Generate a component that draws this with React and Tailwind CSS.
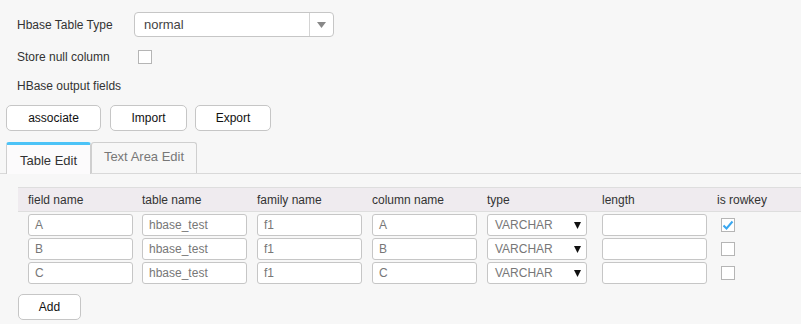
import React, { useState } from 'react';

const rows = [
  { field: 'A', table: 'hbase_test', family: 'f1', column: 'A', type: 'VARCHAR', length: '', rowkey: true },
  { field: 'B', table: 'hbase_test', family: 'f1', column: 'B', type: 'VARCHAR', length: '', rowkey: false },
  { field: 'C', table: 'hbase_test', family: 'f1', column: 'C', type: 'VARCHAR', length: '', rowkey: false },
];

const cols = 'grid grid-cols-[114px_115px_115px_115px_115px_119px_1fr]';

const Box = ({ checked }) => (
  <div className="w-[14px] h-[14px] border border-[#b5b5b5] bg-white flex items-center justify-center">
    {checked && (
      <svg width="12" height="10" viewBox="0 0 12 10">
        <path d="M1.5 5.5 L4.5 8.5 L10.5 1.5" fill="none" stroke="#39a7f0" strokeWidth="2" />
      </svg>
    )}
  </div>
);

const Cell = ({ value }) => (
  <div className="w-[105px] h-[22px] border border-[#c6c6c6] rounded-[3px] bg-white px-[6px] flex items-center text-[#777]">
    {value}
  </div>
);

const App = () => {
  const [tab, setTab] = useState('table');

  return (
    <div className="w-[801px] h-[324px] bg-[#f7f7f7] overflow-hidden text-[12px] text-[#333]" style={{ fontFamily: '"Liberation Sans", Arial, sans-serif' }}>
      <div className="pl-[17px] pt-[12px]">
        <div className="flex items-center h-[25px]">
          <span className="w-[117px]">Hbase Table Type</span>
          <div className="w-[200px] h-[25px] border border-[#c6c6c6] rounded-[4px] bg-white flex items-center">
            <span className="flex-1 pl-[9px] text-[13px] text-[#444]">normal</span>
            <div className="w-[24px] h-full border-l border-[#d4d4d4] flex items-center justify-center">
              <svg width="9" height="6" viewBox="0 0 9 6"><path d="M0 0 H9 L4.5 6 Z" fill="#888" /></svg>
            </div>
          </div>
        </div>
        <div className="flex items-center h-[14px] mt-[13px]">
          <span className="w-[121px]">Store null column</span>
          <Box />
        </div>
        <div className="mt-[15px] h-[14px] leading-[14px]">HBase output fields</div>
      </div>

      <div className="flex pl-[6px] mt-[12px]">
        <button className="w-[95px] h-[26px] border border-[#c6c6c6] rounded-[5px] bg-white text-[#111]">associate</button>
        <button className="ml-[9px] w-[77px] h-[26px] border border-[#c6c6c6] rounded-[5px] bg-white text-[#111]">Import</button>
        <button className="ml-[8px] w-[76px] h-[26px] border border-[#c6c6c6] rounded-[5px] bg-white text-[#111]">Export</button>
      </div>

      <div className="flex pl-[6px] mt-[11px] border-b border-[#d9d9d9] h-[32px]">
        <div
          onClick={() => setTab('table')}
          className="w-[85px] h-[32px] border-x border-[#cfcfcf] border-t-[3px] border-t-[#4cc3f7] rounded-t-[3px] bg-[#fcfbfc] flex items-center justify-center text-[13px] text-[#333] pt-[2px]"
        >
          Table Edit
        </div>
        <div
          onClick={() => setTab('text')}
          className="w-[106px] h-[31px] border border-b-0 border-[#cfcfcf] rounded-t-[3px] bg-[#f7f7f7] flex items-center justify-center text-[13px] text-[#777] pb-[3px]"
        >
          Text Area Edit
        </div>
      </div>

      <div className="ml-[18px] mt-[13px]">
        <div className={`${cols} h-[25px] items-center bg-[#efebef] border-y border-[#dedede]`}>
          {['field name', 'table name', 'family name', 'column name', 'type', 'length'].map(h => (
            <div key={h} className="pl-[10px]">{h}</div>
          ))}
          <div className="pl-[6px]">is rowkey</div>
        </div>
        <div className="pt-[1px]">
          {rows.map(r => (
            <div key={r.field} className={`${cols} h-[24px] items-center`}>
              <div className="pl-[10px]"><Cell value={r.field} /></div>
              <div className="pl-[10px]"><Cell value={r.table} /></div>
              <div className="pl-[10px]"><Cell value={r.family} /></div>
              <div className="pl-[10px]"><Cell value={r.column} /></div>
              <div className="pl-[10px]">
                <div className="w-[100px] h-[22px] border border-[#c6c6c6] rounded-[3px] bg-white pl-[7px] pr-[5px] flex items-center justify-between text-[#777]">
                  <span>{r.type}</span>
                  <svg width="7" height="7" viewBox="0 0 7 7"><path d="M0 0 H7 L3.5 7 Z" fill="#111" /></svg>
                </div>
              </div>
              <div className="pl-[10px]"><Cell value={r.length} /></div>
              <div className="pl-[10px]"><Box checked={r.rowkey} /></div>
            </div>
          ))}
        </div>
        <button className="mt-[9px] w-[63px] h-[26px] border border-[#c6c6c6] rounded-[5px] bg-white text-[#111]">Add</button>
      </div>
    </div>
  );
};

export default App;
